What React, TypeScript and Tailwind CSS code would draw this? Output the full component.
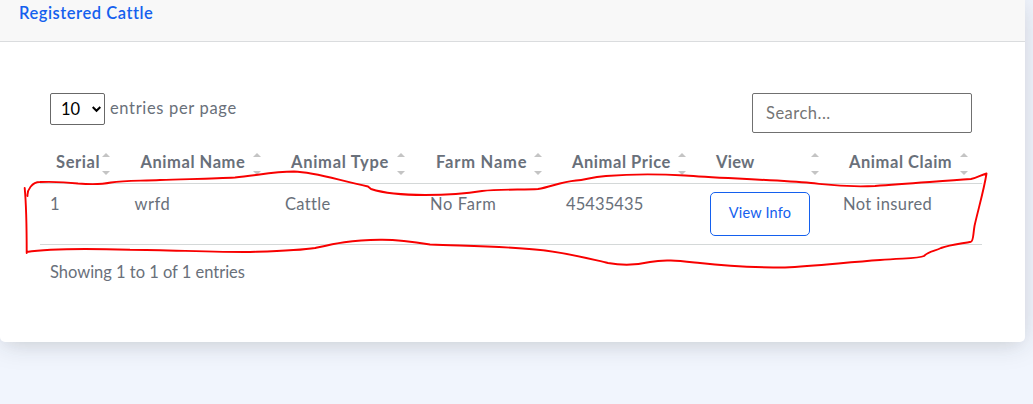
import React from "react";

const columns = [
  { label: "Serial", width: "w-[84.5px]", track: "tracking-[0.6px]", icon: "right-[15px]", value: "1", cellTrack: "tracking-normal" },
  { label: "Animal Name", width: "w-[150.5px]", track: "tracking-[0.55px]", icon: "right-[14px]", value: "wrfd", cellTrack: "tracking-[0.5px]" },
  { label: "Animal Type", width: "w-[145px]", track: "tracking-[0.72px]", icon: "right-[15px]", value: "Cattle", cellTrack: "tracking-[0.35px]" },
  { label: "Farm Name", width: "w-[136px]", track: "tracking-[0.8px]", icon: "right-[14px]", value: "No Farm", cellTrack: "tracking-[0.65px]" },
  { label: "Animal Price", width: "w-[144px]", track: "tracking-[0.55px]", icon: "right-[14px]", value: "45435435", cellTrack: "tracking-[0.1px]" },
  { label: "View", width: "w-[133px]", track: "tracking-[0.25px]", icon: "right-[14px]", value: null, cellTrack: "" },
  { label: "Animal Claim", width: "w-[149px]", track: "tracking-[0.55px]", icon: "right-[14px]", value: "Not insured", cellTrack: "tracking-[0.4px]" },
];

function SortIcon({ position }: { position: string }) {
  return (
    <svg className={`absolute top-[13px] h-[22px] w-2 ${position}`} viewBox="0 0 8 22" fill="#c4c4c4">
      <path d="M4 0 8 4H0Z" />
      <path d="M0 18H8L4 22Z" />
    </svg>
  );
}

function Annotation() {
  return (
    <svg
      className="pointer-events-none absolute top-0 left-0"
      width="1033"
      height="404"
      viewBox="0 0 1033 404"
      fill="none"
      stroke="#f80000"
      strokeWidth="1.9"
      strokeLinecap="round"
      strokeLinejoin="round"
    >
      <path d="M24.7 188C26 202 26.7 215 26.7 253M27.5 196C27 190 32 182 40 182C55 181.500 65 182 78 183.500C90 184.500 104 184 111 182.500C125 180.500 140 181 160 180C190 179 215 178.500 235 177.500C255 176 272 171.500 294 171.500C315 172 337 180 368 186.500L371 189C385 193.500 402 195 425 195C450 195 467 193.500 482 191C500 189 525 190 538 189C551 187 560 182 576 180.500C586 180 590 177 606 176C630 174 660 174 685 175.500C715 178 770 179.500 811 183C830 185 845 187.500 875 186C910 183 940 181.500 971 179C977 178 981 175 986.500 173.500C984 190 978 210 974.500 226C973 235 973.500 241 971 241.700C962 243.500 950 244.500 941 248C935 251 928 251.500 924 256C919 258.500 906 258 880 260C845 262.500 815 266 785 267.500C755 267.500 725 266 700 263C680 261 665 259 650 262C637 265 622 265.500 608 263C590 259 565 252 535 249.500C500 246 470 246 430 244.500C415 242 400 239.500 380 239.800C350 240 335 243.500 315 248C300 250.500 280 251 250 252C210 252 170 250 130 249.700C90 248.500 45 249 26.700 252" />
    </svg>
  );
}

export default function App() {
  return (
    <main className="relative h-[404px] w-full overflow-hidden bg-[#f1f5fd] font-[Lato,sans-serif] text-[16.5px] text-[#69707a]">
      <section className="h-[342px] w-[1025px] rounded-b-[5px] bg-white shadow-[0_2px_28px_rgba(33,40,50,0.15),0_8px_16px_-8px_rgba(50,50,10,0.08)]">
        <header className="flex h-[42px] items-start border-b border-[#dadcde] bg-[#f8f8f8] pt-px pl-[19px] leading-6 font-semibold text-[#1460ee]">
          <span className="tracking-[0.53px]">Registered Cattle</span>
        </header>
        <div className="pt-[51px] pr-[43px] pl-10">
          <div className="flex h-10 justify-between pr-[10px] pl-[10px]">
            <label className="flex h-8 items-center gap-[5px]">
              <span className="relative h-8 w-[55px]">
                <select className="h-8 w-[55px] appearance-none rounded-[2px] border border-[#686868] bg-white pl-[10px] text-black">
                  <option>10</option>
                </select>
                <svg className="pointer-events-none absolute top-[13px] right-[4px]" width="9" height="7" viewBox="0 0 9 7" fill="none" stroke="#000" strokeWidth="2">
                  <path d="m.7 1 3.8 3.800L8.300 1" />
                </svg>
              </span>
              <span className="pb-px tracking-[0.66px]">entries per page</span>
            </label>
            <input
              placeholder="Search..."
              className="h-10 w-[220px] rounded-[2px] border border-[#707070] bg-white px-[13px] tracking-[0.5px] placeholder:text-[#757575] placeholder:opacity-100"
            />
          </div>
          <table className="mt-[7px] w-[942px] table-fixed border-collapse text-left">
            <thead>
              <tr className="h-[43px] border-b border-[#d4d8d8]">
                {columns.map((c) => (
                  <th key={c.label} className={`relative p-0 pt-[10px] pl-4 align-top leading-6 font-bold whitespace-nowrap ${c.width}`}>
                    <span className={c.track}>{c.label}</span>
                    <SortIcon position={c.icon} />
                  </th>
                ))}
              </tr>
            </thead>
            <tbody>
              <tr className="h-[61px] border-b border-[#d4d8d8]">
                {columns.map((c) => (
                  <td key={c.label} className="p-0 pt-2 pl-[10px] align-top leading-6 whitespace-nowrap">
                    {c.value ? (
                      <span className={c.cellTrack}>{c.value}</span>
                    ) : (
                      <button className="flex h-11 w-[100px] items-center justify-center rounded-[5px] border border-[#1460ee] pb-[2px] text-[14.5px] text-[#1460ee]">
                        <span className="tracking-[0.2px]">View Info</span>
                      </button>
                    )}
                  </td>
                ))}
              </tr>
            </tbody>
          </table>
          <p className="mt-[15px] pl-[10px] leading-6 tracking-[-0.02px]">Showing 1 to 1 of 1 entries</p>
        </div>
      </section>
      <Annotation />
    </main>
  );
}
